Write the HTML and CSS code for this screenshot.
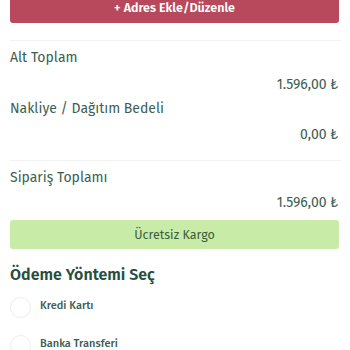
FILE: index.html
```html
<!DOCTYPE html>
<html lang="tr">
<head>
<meta charset="utf-8">
<link rel="stylesheet" href="styles.css">
</head>
<body>
<div class="page">
  <button class="addr-btn">+ Adres Ekle/Düzenle</button>
  <div class="sep sep-top"></div>
  <div class="summary summary-a">
    <div class="label">Alt Toplam</div>
    <div class="value">1.596,00 ₺</div>
    <div class="label">Nakliye / Dağıtım Bedeli</div>
    <div class="value">0,00 ₺</div>
  </div>
  <div class="sep sep-mid"></div>
  <div class="summary summary-b">
    <div class="label">Sipariş Toplamı</div>
    <div class="value">1.596,00 ₺</div>
  </div>
  <div class="free">Ücretsiz Kargo</div>
  <h2 class="pay-title">Ödeme Yöntemi Seç</h2>
  <label class="radio"><span class="circle"></span><span class="radio-text">Kredi Kartı</span></label>
  <label class="radio"><span class="circle"></span><span class="radio-text">Banka Transferi</span></label>
</div>
</body>
</html>
```

FILE: styles.css
```css
html, body {
  margin: 0;
  padding: 0;
  background: #ffffff;
}
body {
  font-family: "Fira Sans", "Noto Sans", "Open Sans", sans-serif;
  color: #3c5e52;
  overflow: hidden;
}
.page {
  padding: 0 10px;
  display: flex;
  flex-direction: column;
}
.addr-btn {
  display: block;
  width: 329px;
  height: 23px;
  border: none;
  border-radius: 0 0 3px 3px;
  background: #b8485c;
  color: #ffffff;
  font-family: inherit;
  font-weight: 600;
  font-size: 12.5px;
  line-height: 15px;
  padding: 0 0 8px 0;
  text-align: center;
}
.sep {
  height: 1px;
  background: #f1f2f2;
  width: 331px;
}
.sep-top { margin-top: 17px; }
.sep-mid { margin-top: 12px; }
.summary {
  display: flex;
  flex-direction: column;
}
.label {
  font-size: 14px;
  height: 27px;
  line-height: 27px;
}
.value {
  font-size: 14px;
  text-align: right;
  padding-right: 2px;
}
.summary-a .label:first-child { margin-top: 3px; }
.summary-a .value:nth-child(2) { height: 24px; line-height: 27px; }
.summary-a .value:nth-child(4) { height: 26px; line-height: 26px; }
.summary-b .label { margin-top: 3px; }
.summary-b .value { height: 24px; line-height: 24px; }
.free {
  margin-top: 5px;
  width: 329px;
  height: 29px;
  line-height: 29px;
  background: #c8eba8;
  border-radius: 3px;
  color: #3c5e3c;
  text-align: center;
  font-size: 12.5px;
}
.pay-title {
  margin: 15px 0 0 0;
  font-size: 16px;
  font-weight: 600;
  line-height: 22px;
  color: #274e40;
}
.radio {
  display: flex;
  align-items: center;
  gap: 9px;
  margin-top: 11px;
}
.radio + .radio { margin-top: 17px; }
.circle {
  width: 19px;
  height: 19px;
  border: 1px solid #ececec;
  border-radius: 50%;
  flex: none;
}
.radio-text {
  font-size: 11px;
  line-height: 14px;
  margin-top: -3px;
  color: #3c5e52;
  font-weight: 500;
}
```
